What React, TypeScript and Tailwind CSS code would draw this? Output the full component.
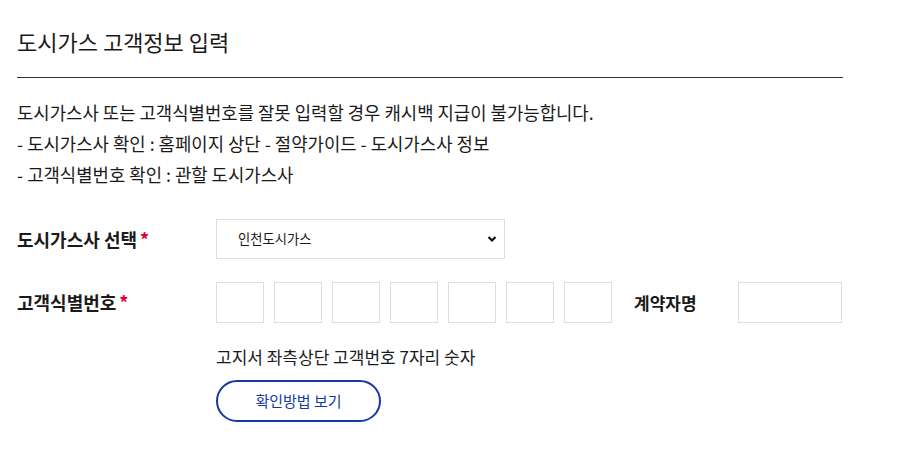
import { useState } from "react";

const FONT = "font-['Noto_Sans_CJK_KR','Noto_Sans',sans-serif]";

export default function App() {
  const [company, setCompany] = useState("incheon");
  const [digits, setDigits] = useState<string[]>(Array(7).fill(""));

  return (
    <div className={`${FONT} w-[900px] h-[452px] bg-white text-[#1a1a1a] pl-[17px] pt-[24px]`}>
      <div className="w-[826px]">
        <h2 className="text-[22px] leading-[34px] pb-[19px] border-b border-[#333] font-normal">
          도시가스 고객정보 입력
        </h2>

        <div className="mt-[19px] text-[17.8px] leading-[31px]">
          <p>도시가스사 또는 고객식별번호를 잘못 입력할 경우 캐시백 지급이 불가능합니다.</p>
          <p>- 도시가스사 확인 : 홈페이지 상단 - 절약가이드 - 도시가스사 정보</p>
          <p>- 고객식별번호 확인 : 관할 도시가스사</p>
        </div>

        <div className="mt-[29px] flex items-center h-[40px]">
          <label className="w-[199px] text-[18px] font-bold">
            도시가스사 선택<span className="text-[#e4002b] ml-[3px]">*</span>
          </label>
          <div className="relative w-[289px] h-[40px]">
            <select
              value={company}
              onChange={(e) => setCompany(e.target.value)}
              className="appearance-none w-full h-full border border-[#ddd] bg-white pl-[21px] text-[13.3px] text-[#1a1a1a] outline-none"
            >
              <option value="incheon">인천도시가스</option>
              <option value="seoul">서울도시가스</option>
              <option value="samchully">삼천리</option>
            </select>
            <svg
              className="absolute right-[8px] top-1/2 -translate-y-1/2 pointer-events-none"
              width="10"
              height="7"
              viewBox="0 0 10 7"
            >
              <path d="M1.5 1.5L5 5L8.5 1.5" fill="none" stroke="#111" strokeWidth="2.2" />
            </svg>
          </div>
        </div>

        <div className="mt-[23px] flex items-center h-[41px]">
          <label className="w-[199px] text-[18px] font-bold">
            고객식별번호<span className="text-[#e4002b] ml-[3px]">*</span>
          </label>
          <div className="flex gap-[10px]">
            {digits.map((d, i) => (
              <input
                key={i}
                value={d}
                maxLength={1}
                onChange={(e) => {
                  const next = [...digits];
                  next[i] = e.target.value;
                  setDigits(next);
                }}
                className="w-[48px] h-[41px] border border-[#ddd] text-center text-[16px] outline-none"
              />
            ))}
          </div>
          <label className="ml-[22px] w-[104px] text-[17px] font-bold">계약자명</label>
          <input className="w-[104px] h-[41px] border border-[#ddd] outline-none px-2" />
        </div>

        <div className="ml-[199px]">
          <p className="mt-[22px] text-[17px] leading-[24px]">고지서 좌측상단 고객번호 7자리 숫자</p>
          <button className="mt-[11px] w-[165px] h-[42px] rounded-full border-2 border-[#1438a6] text-[#1438a6] text-[15px]">
            확인방법 보기
          </button>
        </div>
      </div>
    </div>
  );
}
